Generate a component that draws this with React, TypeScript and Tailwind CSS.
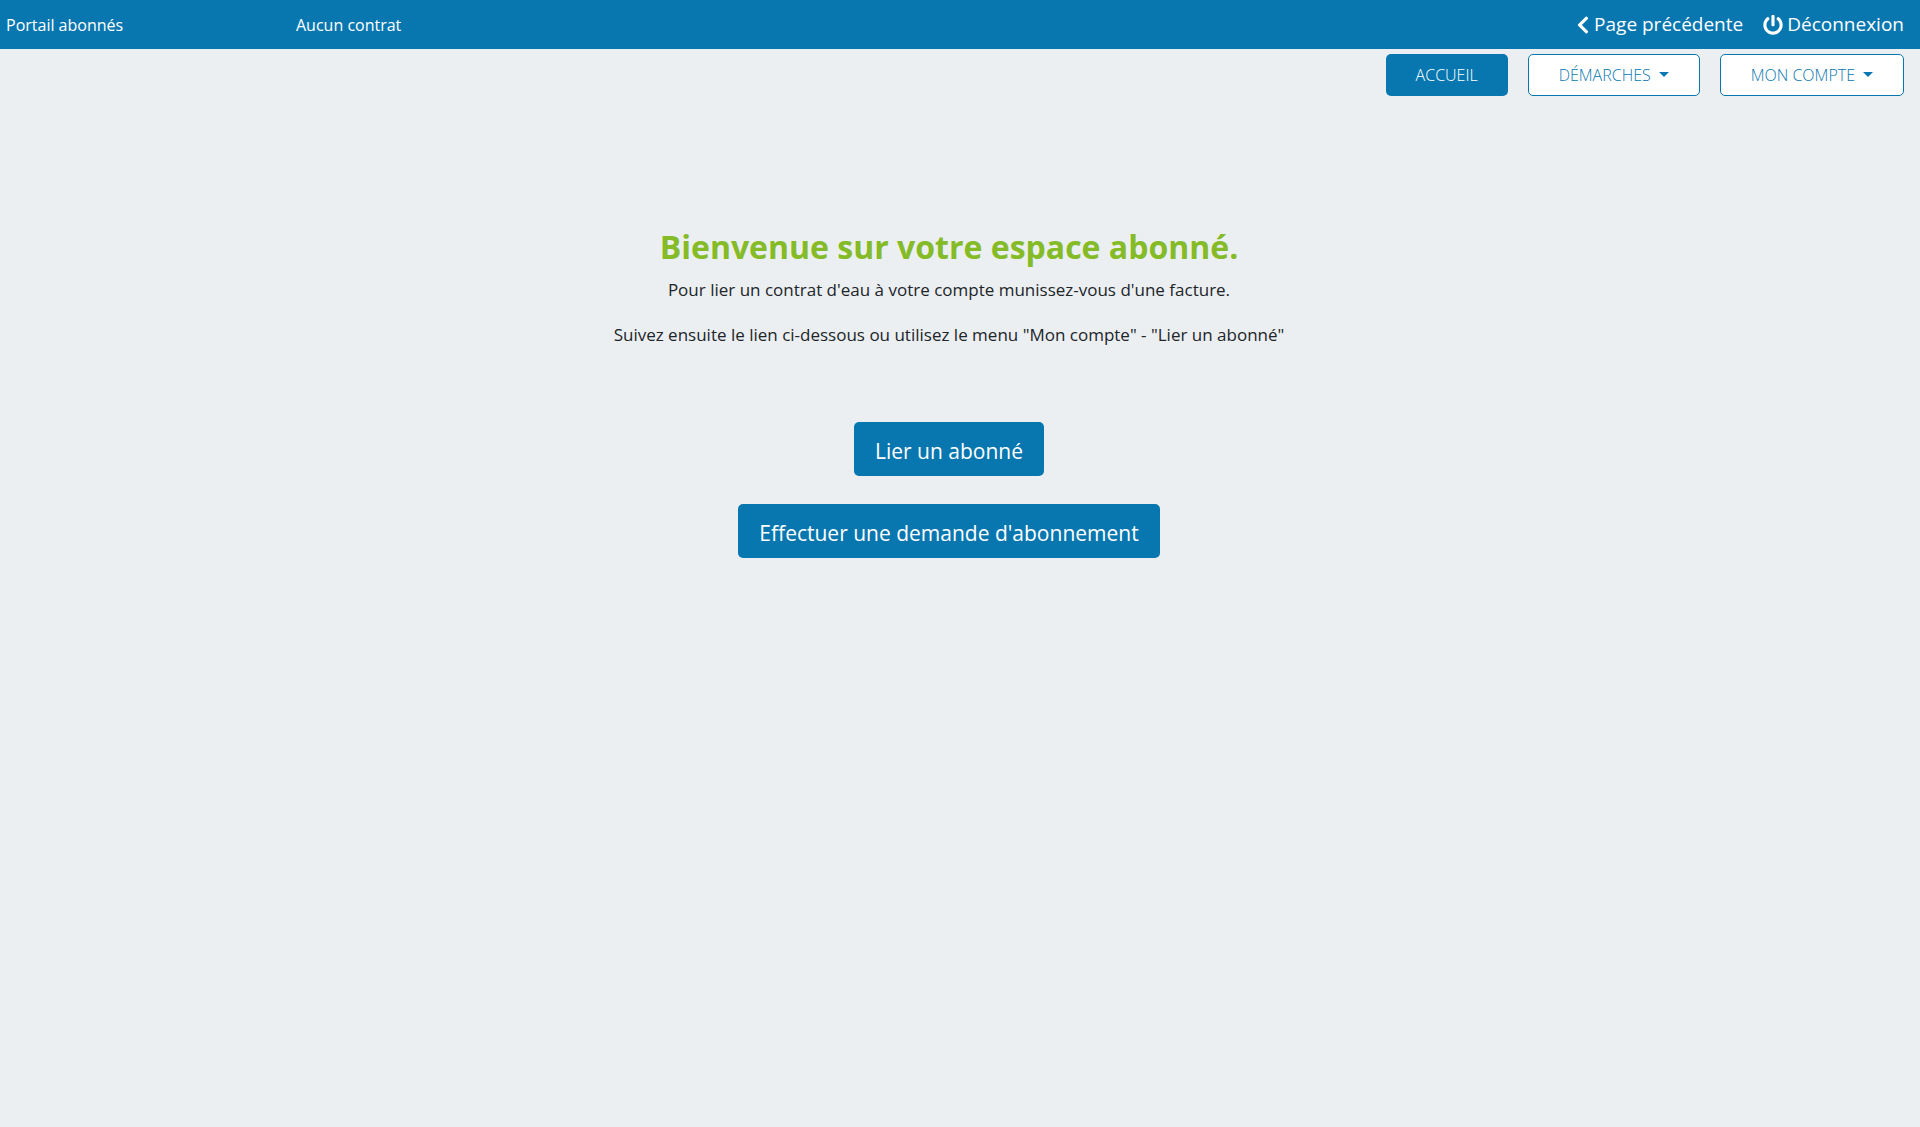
import { FaChevronLeft, FaPowerOff } from "react-icons/fa";

function Caret() {
  return (
    <span
      aria-hidden="true"
      className="mb-[2px] ml-2 border-x-[5px] border-t-[5px] border-x-transparent border-t-[#0877b0]"
    />
  );
}

function MenuButton({ label }: { label: string }) {
  return (
    <button
      type="button"
      aria-haspopup="menu"
      className="flex h-[42px] items-center rounded-[5px] border border-[#0877b0] bg-white px-[30px] text-base font-light text-[#0877b0]"
    >
      {label}
      <Caret />
    </button>
  );
}

export default function App() {
  return (
    <div className="min-h-screen bg-[#ebeff2] font-['Open_Sans','Noto_Sans',sans-serif] text-[#212529]">
      <header className="flex h-[49px] items-center bg-[#0877b0] pr-4 pl-[6px] text-white">
        <span className="w-[290px] text-base">Portail abonnés</span>
        <span className="text-base">Aucun contrat</span>
        <div className="ml-auto flex items-center gap-5 text-[19px]">
          <a href="#precedente" className="flex items-center gap-1">
            <FaChevronLeft className="h-[20px] w-[14px]" />
            Page précédente
          </a>
          <a href="#deconnexion" className="flex items-center gap-1">
            <FaPowerOff className="size-5" />
            Déconnexion
          </a>
        </div>
      </header>

      <nav className="flex justify-end gap-5 pt-[5px] pr-4">
        <a
          href="#accueil"
          aria-current="page"
          className="flex h-[42px] items-center rounded-[5px] bg-[#0877b0] px-[30px] text-base font-light text-white"
        >
          ACCUEIL
        </a>
        <MenuButton label="DÉMARCHES" />
        <MenuButton label="MON COMPTE" />
      </nav>

      <main className="flex flex-col items-center pt-[130px] pr-[22px] text-center">
        <h1 className="text-[32px] leading-[42px] font-bold text-[#84bb27]">
          Bienvenue sur votre espace abonné.
        </h1>
        <p className="mt-2 text-[17px] leading-[27px]">
          Pour lier un contrat d'eau à votre compte munissez-vous d'une facture.
        </p>
        <p className="mt-[18px] text-[17px] leading-[27px]">
          Suivez ensuite le lien ci-dessous ou utilisez le menu "Mon compte" - "Lier un abonné"
        </p>
        <button
          type="button"
          className="mt-[74px] rounded-[5px] bg-[#0877b0] px-[21px] pt-3 pb-2 text-[21px] leading-[34px] text-white"
        >
          Lier un abonné
        </button>
        <button
          type="button"
          className="mt-7 rounded-[5px] bg-[#0877b0] px-[21px] pt-3 pb-2 text-[21px] leading-[34px] text-white"
        >
          Effectuer une demande d'abonnement
        </button>
      </main>
    </div>
  );
}
